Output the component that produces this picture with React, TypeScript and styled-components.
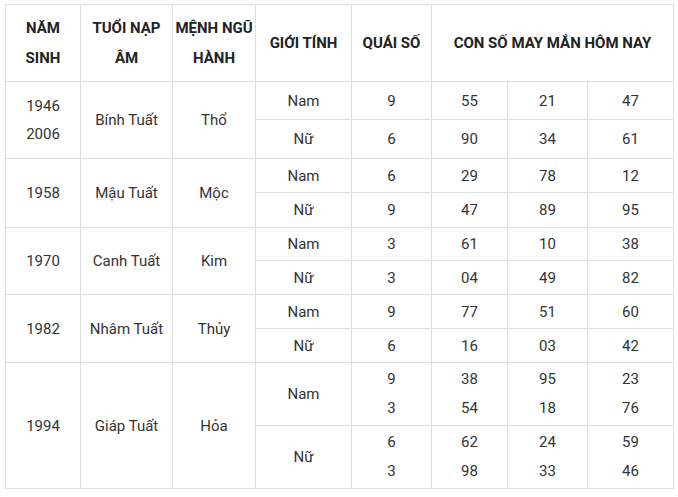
import React from 'react';
import styled, { createGlobalStyle } from 'styled-components';

const Global = createGlobalStyle`
	body {
		margin: 0;
		padding: 4px 5px;
		background: #fff;
		font-family: Roboto, 'Liberation Sans', sans-serif;
	}
`;

const Table = styled.table`
	border-collapse: collapse;
	table-layout: fixed;
	width: 668px;
	color: #333;
	font-size: 15px;
`;

const Head = styled.th`
	border: 1px solid #dedede;
	font-weight: 700;
	color: #222;
	line-height: 30px;
	padding: 0 2px;
	text-align: center;
	vertical-align: middle;
`;

const Cell = styled.td<{ tall?: boolean }>`
	border: 1px solid #dedede;
	padding: 0 2px;
	text-align: center;
	vertical-align: middle;
	line-height: ${(p) => (p.tall ? '29px' : '28px')};
	font-weight: 400;
`;

const Row = styled.tr<{ h: number }>`
	height: ${(p) => p.h}px;
`;

type Line = { gender: string; quai: string[]; nums: string[][]; h: number };
type Group = { years: string[]; napAm: string; menh: string; lines: Line[] };

const groups: Group[] = [
	{
		years: ['1946', '2006'],
		napAm: 'Bính Tuất',
		menh: 'Thổ',
		lines: [
			{ gender: 'Nam', quai: ['9'], nums: [['55', '21', '47']], h: 38 },
			{ gender: 'Nữ', quai: ['6'], nums: [['90', '34', '61']], h: 39 },
		],
	},
	{
		years: ['1958'],
		napAm: 'Mậu Tuất',
		menh: 'Mộc',
		lines: [
			{ gender: 'Nam', quai: ['6'], nums: [['29', '78', '12']], h: 34 },
			{ gender: 'Nữ', quai: ['9'], nums: [['47', '89', '95']], h: 35 },
		],
	},
	{
		years: ['1970'],
		napAm: 'Canh Tuất',
		menh: 'Kim',
		lines: [
			{ gender: 'Nam', quai: ['3'], nums: [['61', '10', '38']], h: 33 },
			{ gender: 'Nữ', quai: ['3'], nums: [['04', '49', '82']], h: 34 },
		],
	},
	{
		years: ['1982'],
		napAm: 'Nhâm Tuất',
		menh: 'Thủy',
		lines: [
			{ gender: 'Nam', quai: ['9'], nums: [['77', '51', '60']], h: 34 },
			{ gender: 'Nữ', quai: ['6'], nums: [['16', '03', '42']], h: 34 },
		],
	},
	{
		years: ['1994'],
		napAm: 'Giáp Tuất',
		menh: 'Hỏa',
		lines: [
			{ gender: 'Nam', quai: ['9', '3'], nums: [['38', '95', '23'], ['54', '18', '76']], h: 63 },
			{ gender: 'Nữ', quai: ['6', '3'], nums: [['62', '24', '59'], ['98', '33', '46']], h: 63 },
		],
	},
];

const widths = [75, 92, 83, 96, 80, 76, 80, 86];

function Lines({ items }: { items: string[] }) {
	return (
		<>
			{items.map((t, i) => (
				<React.Fragment key={i}>
					{i > 0 && <br />}
					{t}
				</React.Fragment>
			))}
		</>
	);
}

export default function App() {
	return (
		<>
			<Global />
			<Table>
				<colgroup>
					{widths.map((w, i) => (
						<col key={i} style={{ width: w }} />
					))}
				</colgroup>
				<thead>
					<Row h={77}>
						<Head>NĂM<br />SINH</Head>
						<Head>TUỔI NẠP<br />ÂM</Head>
						<Head>MỆNH NGŨ<br />HÀNH</Head>
						<Head>GIỚI TÍNH</Head>
						<Head>QUÁI SỐ</Head>
						<Head colSpan={3}>CON SỐ MAY MẮN HÔM NAY</Head>
					</Row>
				</thead>
				<tbody>
					{groups.map((g) =>
						g.lines.map((l, li) => {
							const tall = l.quai.length > 1;
							return (
								<Row h={l.h} key={g.years[0] + li}>
									{li === 0 && (
										<>
											<Cell rowSpan={g.lines.length}>
												<Lines items={g.years} />
											</Cell>
											<Cell rowSpan={g.lines.length}>{g.napAm}</Cell>
											<Cell rowSpan={g.lines.length}>{g.menh}</Cell>
										</>
									)}
									<Cell>{l.gender}</Cell>
									<Cell tall={tall}>
										<Lines items={l.quai} />
									</Cell>
									{[0, 1, 2].map((c) => (
										<Cell tall={tall} key={c}>
											<Lines items={l.nums.map((n) => n[c])} />
										</Cell>
									))}
								</Row>
							);
						})
					)}
				</tbody>
			</Table>
		</>
	);
}
